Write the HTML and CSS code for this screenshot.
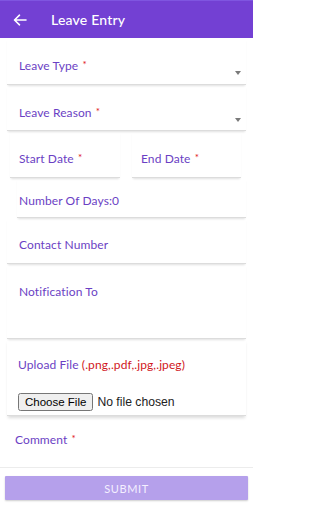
FILE: index.html
```html
<!DOCTYPE html>
<html>
<head>
<meta charset="utf-8">
<meta name="viewport" content="width=device-width, initial-scale=1">
<link rel="stylesheet" href="styles.css">
</head>
<body>
<div class="page">
<header class="appbar">
  <svg class="back" width="14" height="12" viewBox="0 0 14 12"><path d="M13 6H1.8M6.5 1.2L1.5 6l5 4.8" fill="none" stroke="#fff" stroke-width="1.6" stroke-linecap="round" stroke-linejoin="round"/></svg>
  <span class="title">Leave Entry</span>
</header>
<main class="form">
  <div class="field select f1">
    <span class="label">Leave Type <i class="req">*</i></span>
    <span class="caret"></span>
  </div>
  <div class="field select f2">
    <span class="label">Leave Reason <i class="req">*</i></span>
    <span class="caret"></span>
  </div>
  <div class="daterow">
    <div class="field date d1"><span class="label">Start Date <i class="req">*</i></span></div>
    <div class="field date d2"><span class="label">End Date <i class="req">*</i></span></div>
  </div>
  <div class="field days"><span class="label">Number Of Days:0</span></div>
  <div class="field contact"><span class="label">Contact Number</span></div>
  <div class="field notify"><span class="label">Notification To</span></div>
  <div class="field upload">
    <span class="label">Upload File <span class="ext">(.png,.pdf,.jpg,.jpeg)</span></span>
    <input class="file" type="file">
  </div>
  <div class="field comment"><span class="label">Comment <i class="req">*</i></span></div>
  <button class="submit" type="button">SUBMIT</button>
</main>
</div>
</body>
</html>
```
FILE: styles.css
```css
* { box-sizing: border-box; }
html, body { background: #fff; }
body {
  margin: 0;
  font-family: Lato, "Noto Sans", sans-serif;
}
.page {
  width: 253px;
  height: 512px;
  overflow: hidden;
}
.appbar {
  height: 38px;
  background: #7340d3;
  border-top: 1px solid #7f55e0;
  display: flex;
  align-items: center;
  padding-left: 13px;
}
.back { display: block; }
.title {
  margin-left: 24px;
  color: #fff;
  font-size: 14px;
  font-weight: 500;
  letter-spacing: 0.2px;
}
.form { display: flex; flex-direction: column; }
.field {
  border-bottom: 1px solid #dcdcdc;
  box-shadow: 0 2px 2px -1px rgba(0,0,0,0.12);
  margin: 0 7px;
  padding-left: 12px;
}
.label {
  display: block;
  font-size: 12px;
  line-height: 14px;
  color: #6b3fc4;
  letter-spacing: 0.1px;
}
.req {
  font-style: normal;
  color: #e0101a;
  font-size: 10px;
  position: relative;
  top: -2px;
  margin-left: 1px;
}
.select {
  display: flex;
  align-items: flex-start;
  padding-right: 5px;
}
.select .label { flex: 1; }
.caret {
  margin-top: 12px;
  width: 0;
  height: 0;
  border-left: 3px solid transparent;
  border-right: 3px solid transparent;
  border-top: 4px solid #7a7a7a;
}
.f1 { height: 47px; padding-top: 21px; }
.f2 { height: 46px; padding-top: 21px; }
.daterow { display: flex; height: 47px; }
.date { height: 47px; padding-top: 21px; padding-left: 9px; }
.d1 { margin: 0 0 0 10px; width: 110px; }
.d2 { margin: 0 0 0 12px; width: 109px; }
.days { height: 40px; padding-top: 16px; margin-left: 17px; padding-left: 2px; }
.contact { height: 46px; padding-top: 20px; }
.notify { height: 75px; padding-top: 21px; }
.upload {
  height: 77px;
  padding-top: 19px;
  padding-left: 11px;
  box-shadow: 0 3px 3px -1px rgba(0,0,0,0.14);
}
.ext { color: #d0161c; }
.file {
  display: block;
  margin-top: 21px;
  font-family: "Liberation Sans", Arial, sans-serif;
  font-size: 12.2px;
  color: #222;
}
.file::file-selector-button {
  font-family: "Liberation Sans", Arial, sans-serif;
  font-size: 11.5px;
  height: 18px;
  padding: 0 5px;
  margin-right: 4px;
}
.comment {
  height: 52px;
  padding-top: 17px;
  margin: 0;
  padding-left: 15px;
  border-bottom: 1px solid #ececec;
  box-shadow: none;
}
.submit {
  margin: 8px 5px 0;
  height: 24px;
  border: none;
  border-radius: 1px;
  background: #b5a0eb;
  color: #f4efff;
  font-family: Lato, "Noto Sans", sans-serif;
  font-size: 11px;
  letter-spacing: 0.6px;
  box-shadow: 0 1px 2px rgba(0,0,0,0.2);
}
```
